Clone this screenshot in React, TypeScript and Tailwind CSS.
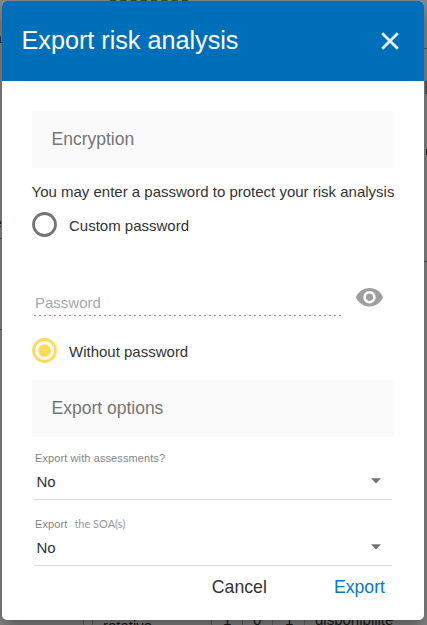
import { ReactNode, useState } from "react";

interface SectionProps {
  children: ReactNode;
}

function SectionTitle({ children }: SectionProps) {
  return (
    <h3 className="flex h-[57px] items-center bg-[#fafafa] pl-[19.5px] text-[17.5px] text-[#757575]">
      {children}
    </h3>
  );
}

interface RadioProps {
  label: string;
  checked: boolean;
  onSelect: () => void;
}

function Radio({ label, checked, onSelect }: RadioProps) {
  return (
    <button
      role="radio"
      aria-checked={checked}
      onClick={onSelect}
      className="flex h-[26px] items-start text-[15px] text-[#333333]"
    >
      <svg className="mr-3 size-[25px]" viewBox="0 0 25 25" fill="none">
        <circle
          cx="12.5"
          cy="12.5"
          r="11"
          strokeWidth="2.8"
          stroke={checked ? "#ffdb57" : "#757575"}
        />
        {checked && <circle cx="12.5" cy="12.5" r="6.3" fill="#ffdb57" />}
      </svg>
      <span className="pt-1 leading-5">{label}</span>
    </button>
  );
}

interface SelectFieldProps {
  label: ReactNode;
  value: string;
}

function SelectField({ label, value }: SelectFieldProps) {
  return (
    <div className="ml-0.5 mr-0.5 flex h-[66px] flex-col border-b border-[#d9d9d9]">
      <div className="mt-4 flex h-4 items-center pl-px text-[11px] tracking-[0.1px] text-[#858585]">
        {label}
      </div>
      <div className="mt-1.5 flex h-5 items-center justify-between pl-[2.5px] pr-[11px] text-[15px] text-[#333333]">
        {value}
        <svg className="mb-0.5 h-[6px] w-2.5" viewBox="0 0 10 6">
          <path d="M0 0.3h10L5 5.5z" fill="#757575" />
        </svg>
      </div>
    </div>
  );
}

export default function App() {
  const [mode, setMode] = useState("none");

  return (
    <div className="relative h-[625px] w-[427px] overflow-hidden bg-[#8a8a8a] pl-0.5 pt-px font-['Liberation_Sans',Arial,sans-serif]">
      {/* Dimmed page behind the dialog */}
      <div className="absolute inset-0 text-[15px] leading-[17px] text-[#1c1c1c]">
        <div className="absolute left-[110px] top-0 h-px w-[78px] border-t-2 border-dashed border-[#1f5a24]" />
        <span className="absolute -left-1.5 top-[28px] text-sm">a</span>
        <span className="absolute -left-1.5 top-[213px] text-sm">e</span>
        <div className="absolute left-0 top-[238px] h-px w-0.5 bg-[#5c5c5c]" />
        <div className="absolute left-0 top-[329px] h-px w-0.5 bg-[#5c5c5c]" />
        <div className="absolute right-0 top-[48px] h-px w-[3px] bg-[#5c5c5c]" />
        <div className="absolute right-0 top-[81px] h-[13px] w-[2px] bg-[#5c5c5c]" />
        <div className="absolute right-0 top-[149px] h-[6px] w-px bg-[#222222]" />
        <div className="absolute right-0 top-[261px] h-px w-[3px] bg-[#555555]" />
        <div className="absolute left-[83px] top-[620px] h-[5px] w-px bg-[#6a6a6a]" />
        <div className="absolute left-[92px] top-[620px] h-[5px] w-px bg-[#6a6a6a]" />
        <div className="absolute left-[211px] top-[620px] h-[5px] w-px bg-[#6a6a6a]" />
        <div className="absolute left-[242px] top-[620px] h-[5px] w-px bg-[#6a6a6a]" />
        <div className="absolute left-[272px] top-[620px] h-[5px] w-px bg-[#6a6a6a]" />
        <div className="absolute left-[304px] top-[620px] h-[5px] w-px bg-[#6a6a6a]" />
        <span className="absolute left-[103px] top-[617px]">rotative</span>
        <span className="absolute left-[223px] top-[611px]">1</span>
        <span className="absolute left-[253px] top-[611px]">0</span>
        <span className="absolute left-[285px] top-[611px]">1</span>
        <span className="absolute left-[315px] top-[611px]">disponibilité</span>
      </div>

      <div className="relative flex h-[619px] w-[422px] flex-col overflow-hidden rounded-[5px] bg-white shadow-[0_8px_18px_rgba(0,0,0,0.4)]">
        <div className="flex h-20 shrink-0 items-center justify-between bg-[#006fba] pl-[19.5px] pr-[25.5px] text-white">
          <h2 className="text-[25.2px]">Export risk analysis</h2>
          <button title="Close">
            <svg className="size-[18px]" viewBox="0 0 18 18" fill="none">
              <path d="M1.2 1.2l15.6 15.6M16.8 1.2L1.2 16.8" stroke="#e5f0f8" strokeWidth="2.8" />
            </svg>
          </button>
        </div>

        <div className="flex flex-col pl-[30px] pr-[30px] pt-[30px]">
          <SectionTitle>Encryption</SectionTitle>
          <p className="-ml-[0.5px] mt-[14px] whitespace-nowrap text-[15px] leading-5 text-[#333333]">
            You may enter a password to protect your risk analysis
          </p>
          <div className="mt-2.5">
            <Radio
              label="Custom password"
              checked={mode === "custom"}
              onSelect={() => setMode("custom")}
            />
          </div>

          {/* Password field */}
          <div className="mt-[47px] flex h-[31px] items-start justify-between pl-0.5 pr-[11px]">
            <div className="flex h-[31px] w-[307px] flex-col justify-between">
              <span className="pl-px pt-2 text-[15px] leading-5 text-[#a8a8a8]">Password</span>
              <svg className="h-px w-full shrink-0" viewBox="0 0 307 1">
                <path d="M0 0.5h307" stroke="#8c8c8c" strokeDasharray="2 3" />
              </svg>
            </div>
            <svg className="-mt-px h-[27px] w-[27px]" viewBox="1 1.2 22 22" fill="#9e9e9e">
              <path d="M12 4.5C7 4.5 2.73 7.61 1 12c1.73 4.39 6 7.5 11 7.5s9.27-3.11 11-7.5c-1.73-4.39-6-7.5-11-7.5zM12 17c-2.76 0-5-2.24-5-5s2.24-5 5-5 5 2.24 5 5-2.24 5-5 5zm0-8c-1.66 0-3 1.34-3 3s1.34 3 3 3 3-1.34 3-3-1.34-3-3-3z" />
            </svg>
          </div>

          <div className="mb-4 mt-[22px]">
            <Radio
              label="Without password"
              checked={mode === "none"}
              onSelect={() => setMode("none")}
            />
          </div>

          <SectionTitle>Export options</SectionTitle>
          <div className="-mt-[3px] flex flex-col">
            <SelectField label="Export with assessments?" value="No" />
            <SelectField
              label={
                <>
                  Export
                  <span className="ml-[7px] font-['Lato',sans-serif] text-[11px] tracking-normal text-[#999999]">
                    the SOA(s)
                  </span>
                </>
              }
              value="No"
            />
          </div>

          <div className="mt-[9px] flex justify-end pr-[9px] text-[17.7px] leading-6">
            <button className="mr-[67px] text-[#333333]">Cancel</button>
            <button className="text-[#0a75c0]">Export</button>
          </div>
        </div>
      </div>
    </div>
  );
}
